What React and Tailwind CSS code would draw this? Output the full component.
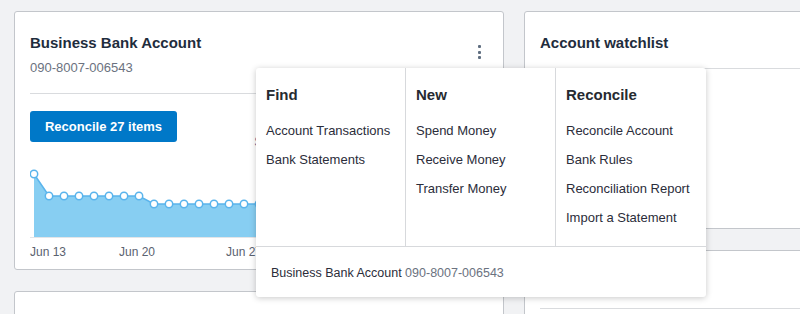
import React from "react";

const pts = [
  [34, 172], [49, 194], [64, 194], [79, 194], [94, 194], [109, 194], [124, 194], [139, 194],
  [154, 202], [169, 202], [184, 202], [199, 202], [214, 202], [229, 202], [244, 202], [259, 202],
  [274, 202], [289, 202], [304, 202], [319, 202], [334, 202], [349, 202], [364, 202], [379, 202],
  [394, 202], [409, 202], [424, 202], [439, 202], [454, 202], [469, 202],
];

function Chart() {
  const ox = 30;
  const oy = 160;
  const p = pts.map(([x, y]) => [x - ox, y - oy]);
  const line = p.map(([x, y]) => `${x},${y}`).join(" ");
  const area = `${p[0][0]},75 ${line} ${p[p.length - 1][0]},75`;
  return (
    <svg width="460" height="78" className="block">
      <polygon points={area} fill="#87cef2" />
      <polyline points={line} fill="none" stroke="#5ab4ec" strokeWidth="1.5" />
      <line x1="0" y1="75.5" x2="460" y2="75.5" stroke="#e3e5e8" strokeWidth="1" />
      {p.map(([x, y], i) => (
        <circle key={i} cx={x} cy={y} r="3.7" fill="#fff" stroke="#5ab4ec" strokeWidth="1.5" />
      ))}
    </svg>
  );
}

function MenuCol({ title, items, last }) {
  return (
    <div className={`w-[150px] h-full pl-[10px] pt-[17px] ${last ? "" : "border-r border-[#d7d9dc]"}`}>
      <div className="text-[15px] font-bold text-[#262a30] leading-[20px]">{title}</div>
      <div className="mt-[17px] flex flex-col gap-[12px]">
        {items.map((t) => (
          <div key={t} className="text-[13px] leading-[17px] text-[#2b2d3a]">{t}</div>
        ))}
      </div>
    </div>
  );
}

export default function App() {
  return (
    <div
      className="relative w-[800px] h-[314px] overflow-hidden bg-[#f1f2f4]"
      style={{ fontFamily: '"Liberation Sans", Arial, sans-serif' }}
    >
      <div className="flex gap-[20px] pl-[14px] pt-[11px]">
        {/* left column */}
        <div className="flex flex-col gap-[21px] w-[490px] shrink-0">
          <div className="h-[259px] bg-white border border-[#c3c6cb] rounded-[3px] px-[15px] pt-[21px] relative">
            <div className="flex justify-between items-start">
              <div>
                <div className="text-[15px] font-bold text-[#1f2d3d] leading-[20px]">Business Bank Account</div>
                <div className="text-[13px] text-[#6b7280] leading-[17px] mt-[6px]">090-8007-006543</div>
              </div>
              <div className="flex flex-col gap-[2.5px] mt-[12px] mr-[7px]">
                <span className="w-[3px] h-[3px] bg-[#5f6e80] rounded-[1px]" />
                <span className="w-[3px] h-[3px] bg-[#5f6e80] rounded-[1px]" />
                <span className="w-[3px] h-[3px] bg-[#5f6e80] rounded-[1px]" />
              </div>
            </div>
            <div className="h-px bg-[#d9dbde] mt-[17px]" />
            <div className="flex items-start justify-between mt-[17px]">
              <button className="w-[147px] h-[31px] rounded-[3px] bg-[#0078c8] text-white text-[13px] font-bold">
                Reconcile 27 items
              </button>
              <div className="text-[13px] text-[#5b5f9a] mt-[21px] mr-[226px]">$</div>
            </div>
            <div className="mt-[10px]">
              <Chart />
            </div>
            <div className="relative h-[20px] mt-[2px] text-[12px] text-[#5a6270]">
              <span className="absolute left-0 top-[1px]">Jun 13</span>
              <span className="absolute left-[89px] top-[1px]">Jun 20</span>
              <span className="absolute left-[196px] top-[1px]">Jun 27</span>
              <span className="absolute left-[303px] top-[1px]">Jul 4</span>
            </div>
          </div>
          <div className="h-[80px] bg-white border border-[#c3c6cb] rounded-[3px]" />
        </div>
        {/* right column */}
        <div className="flex flex-col gap-[21px] w-[490px] shrink-0">
          <div className="h-[218px] bg-white border border-[#c3c6cb] rounded-[3px] pt-[21px]">
            <div className="px-[15px] text-[15px] font-bold text-[#1f2d3d] leading-[20px]">Account watchlist</div>
            <div className="h-px bg-[#d9dbde] ml-[15px] mt-[15px]" />
          </div>
          <div className="h-[80px] bg-white border border-[#c3c6cb] rounded-[3px] pt-[57px]">
            <div className="h-px bg-[#d9dbde] ml-[15px]" />
          </div>
        </div>
      </div>

      {/* dropdown popup */}
      <div className="absolute left-[256px] top-[68px] w-[450px] h-[229px] bg-white rounded-[3px] shadow-[0_1px_6px_rgba(0,0,0,0.22)] flex flex-col">
        <div className="flex h-[179px] border-b border-[#d7d9dc]">
          <MenuCol title="Find" items={["Account Transactions", "Bank Statements"]} />
          <MenuCol title="New" items={["Spend Money", "Receive Money", "Transfer Money"]} />
          <MenuCol
            title="Reconcile"
            items={["Reconcile Account", "Bank Rules", "Reconciliation Report", "Import a Statement"]}
            last
          />
        </div>
        <div className="pl-[15px] pt-[18px] text-[12.5px] leading-[16px]">
          <span className="text-[#2b2d3a]">Business Bank Account </span>
          <span className="text-[#6b7280]">090-8007-006543</span>
        </div>
      </div>
    </div>
  );
}
